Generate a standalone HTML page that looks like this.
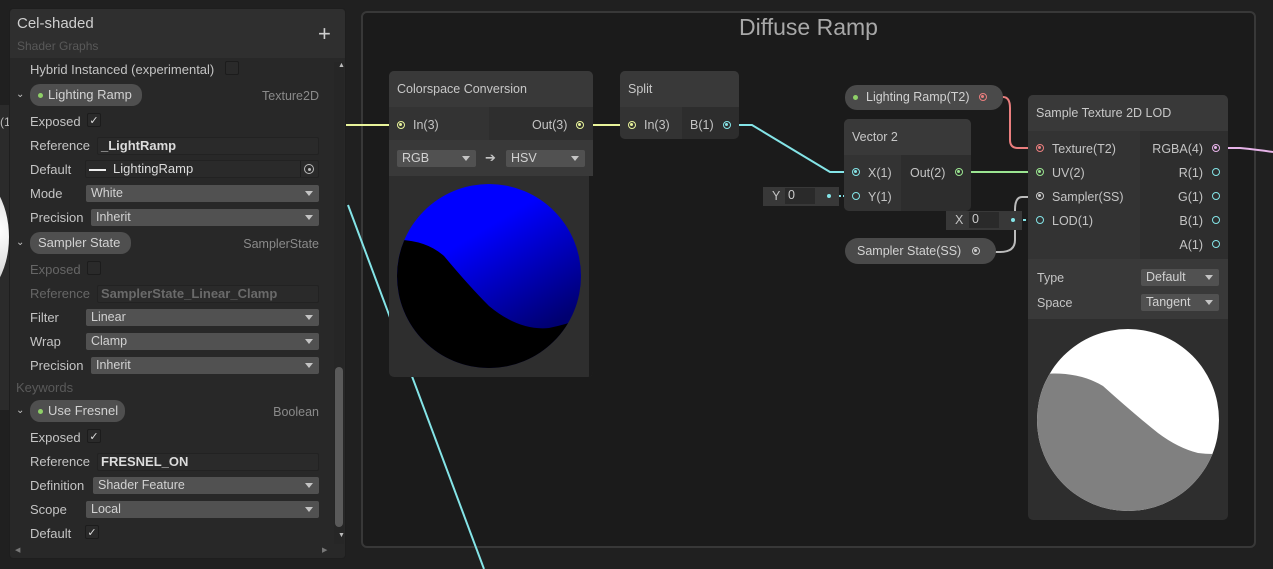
<!DOCTYPE html>
<html><head><meta charset="utf-8"><style>
*{margin:0;padding:0;box-sizing:border-box}
body{width:1273px;height:569px;overflow:hidden;background:#202020;font-family:"Liberation Sans","DejaVu Sans",sans-serif;font-size:12.5px;color:#c4c4c4;position:relative}
.a{position:absolute}
.node{position:absolute;background:#2d2d2d;border-radius:5px;overflow:hidden}
.title{position:absolute;left:0;right:0;top:0;background:#393939;color:#c8c8c8;font-size:12.5px;padding-left:8px}
.t{position:absolute;white-space:nowrap;font-size:12.5px}
.port{position:absolute;width:8px;height:8px;border-radius:50%;border:1.5px solid}
.port.f::after{content:"";position:absolute;left:1px;top:1px;width:3px;height:3px;border-radius:50%;background:currentColor}
.dd{position:absolute;background:#515151;border-radius:2px;height:17px;color:#d2d2d2;font-size:12.5px;padding-left:5px;line-height:17px}
.dd::after{content:"";position:absolute;right:6px;top:6px;border-left:4px solid transparent;border-right:4px solid transparent;border-top:5px solid #c4c4c4}
.lbl{position:absolute;left:30px;font-size:13px;color:#c4c4c4;white-space:nowrap}
.fld{position:absolute;left:97px;width:222px;height:18px;background:#2a2a2a;border:1px solid #222;border-radius:2px;font-weight:bold;color:#dcdcdc;padding-left:3px;line-height:16px;font-size:13px}
.chk{position:absolute;width:14px;height:14px;background:#2a2a2a;border:1px solid #1c1c1c;border-radius:2px;color:#ddd;font-size:11px;line-height:14px;text-align:center}
.pill{position:absolute;background:#4f4f4f;border-radius:10px;height:22px;line-height:22px;color:#d2d2d2;font-size:13px;white-space:nowrap}
.arrow{position:absolute;left:16px;font-size:10px;color:#c4c4c4}
.typ{position:absolute;right:954px;color:#8a8a8a;font-size:12.5px}
</style></head><body>

<div class="a" style="left:0;top:105px;width:9px;height:305px;background:#2b2b2b"></div>
<div class="a" style="left:0;top:115px;width:9px;height:20px;overflow:hidden;color:#bbb;font-size:12px">(1</div>
<div class="a" style="left:-75px;top:172px;width:84px;height:130px;border-radius:50%;background:radial-gradient(circle at 85% 45%,#fff,#ddd 40%,#777)"></div>

<div class="a" style="left:361px;top:11px;width:895px;height:537px;border:2px solid #383838;border-radius:6px;background:#1b1b1b"></div>
<div class="a" style="left:361px;top:14px;width:895px;text-align:center;font-size:23px;color:#a8a8a8">Diffuse Ramp</div>

<svg class="a" style="left:0;top:0" width="1273" height="569">
<g fill="none" stroke-width="2">
<path d="M346 125 L400 125" stroke="#e8f39a"/>
<path d="M592 125 L632 125" stroke="#e8f39a"/>
<path d="M727 125 L752 125 L830 172 L856 172" stroke="#84e4e7"/>
<path d="M348 205 L484 569" stroke="#84e4e7"/>
<path d="M958 172 L1040 172" stroke="#9be591"/>
<path d="M983 97 L1003 97 Q1010 97 1010 108 L1010 140 Q1010 148 1018 148 L1040 148" stroke="#ea7e7e"/>
<path d="M1040 197 L1022 197 Q1015 197 1015 210 L1015 240 Q1015 252 1000 252 L995 252" stroke="#bbbbbb"/>
<path d="M1216 148 L1240 148 Q1260 150 1273 152" stroke="#e6b3e8"/>
<path d="M828 196 L856 196" stroke="#84e4e7" stroke-dasharray="3 2"/>
<path d="M1013 220 L1040 220" stroke="#84e4e7" stroke-dasharray="3 2"/>
</g>
</svg>

<div class="node" style="left:389px;top:71px;width:204px;height:306px;background:#2e2e2e">
 <div class="title" style="height:36px;line-height:36px">Colorspace Conversion</div>
 <div class="a" style="left:0;top:36px;width:100px;height:33px;background:#333"></div>
 <div class="a" style="left:0;top:69px;width:204px;height:36px;background:#393939"></div>
 <div class="a" style="left:200px;top:105px;width:4px;height:201px;background:#1b1b1b"></div>
</div>
<div class="port f" style="left:397px;top:121px;color:#e8f39a"></div>
<div class="t" style="left:413px;top:118px">In(3)</div>
<div class="t" style="left:532px;top:118px">Out(3)</div>
<div class="port f" style="left:576px;top:121px;color:#e8f39a"></div>
<div class="dd" style="left:397px;top:150px;width:79px">RGB</div>
<div class="t" style="left:485px;top:150px;font-size:13px">➔</div>
<div class="dd" style="left:506px;top:150px;width:79px">HSV</div>
<svg class="a" style="left:389px;top:176px" width="200" height="200">
<defs>
<clipPath id="c1"><circle cx="100" cy="100" r="92"/></clipPath>
<linearGradient id="g1" x1="0.2" y1="0" x2="0.8" y2="1"><stop offset="0.3" stop-color="#0000ff"/><stop offset="0.85" stop-color="#000070"/></linearGradient>
</defs>
<circle cx="100" cy="100" r="92" fill="url(#g1)"/>
<path clip-path="url(#c1)" d="M0 64 Q35 62 55 80 Q80 110 100 130 Q130 155 160 152 Q180 148 200 140 L200 200 L0 200Z" fill="#000"/>
</svg>

<div class="node" style="left:620px;top:71px;width:119px;height:68px">
 <div class="title" style="height:36px;line-height:36px">Split</div>
 <div class="a" style="left:0;top:36px;width:62px;height:32px;background:#333"></div>
</div>
<div class="port f" style="left:628px;top:121px;color:#e8f39a"></div>
<div class="t" style="left:644px;top:118px">In(3)</div>
<div class="t" style="left:690px;top:118px">B(1)</div>
<div class="port f" style="left:723px;top:121px;color:#84e4e7"></div>

<div class="pill" style="left:845px;top:85px;width:158px;height:25px;line-height:25px;border-radius:12px;background:#4a4a4a;padding-left:21px;font-size:12.5px">Lighting Ramp(T2)</div>
<div class="a" style="left:853px;top:95px;width:5px;height:5px;border-radius:50%;background:#8fd068"></div>
<div class="port f" style="left:979px;top:93px;color:#ea7e7e"></div>

<div class="node" style="left:844px;top:119px;width:127px;height:92px">
 <div class="title" style="height:36px;line-height:36px">Vector 2</div>
 <div class="a" style="left:0;top:36px;width:57px;height:56px;background:#333"></div>
</div>
<div class="port f" style="left:852px;top:168px;color:#84e4e7"></div>
<div class="t" style="left:868px;top:166px">X(1)</div>
<div class="t" style="left:910px;top:166px">Out(2)</div>
<div class="port f" style="left:955px;top:168px;color:#9be591"></div>
<div class="port" style="left:852px;top:192px;color:#84e4e7"></div>
<div class="t" style="left:868px;top:190px">Y(1)</div>
<div class="a" style="left:763px;top:187px;width:76px;height:19px;background:#383838"></div>
<div class="t" style="left:772px;top:189px">Y</div>
<div class="a" style="left:785px;top:188px;width:30px;height:16px;background:#2a2a2a;color:#ccc;padding-left:3px">0</div>
<div class="a" style="left:827px;top:194px;width:4px;height:4px;border-radius:50%;background:#84e4e7"></div>

<div class="a" style="left:946px;top:211px;width:76px;height:19px;background:#383838"></div>
<div class="t" style="left:955px;top:213px">X</div>
<div class="a" style="left:969px;top:212px;width:30px;height:16px;background:#2a2a2a;color:#ccc;padding-left:3px">0</div>
<div class="a" style="left:1011px;top:218px;width:4px;height:4px;border-radius:50%;background:#84e4e7"></div>

<div class="pill" style="left:845px;top:238px;width:151px;height:26px;line-height:26px;border-radius:13px;background:#4a4a4a;padding-left:12px;font-size:12.5px">Sampler State(SS)</div>
<div class="port f" style="left:972px;top:247px;color:#ccc"></div>

<div class="node" style="left:1028px;top:95px;width:200px;height:425px;background:#2e2e2e">
 <div class="title" style="height:36px;line-height:36px">Sample Texture 2D LOD</div>
 <div class="a" style="left:0;top:36px;width:112px;height:128px;background:#333"></div>
 <div class="a" style="left:0;top:164px;width:200px;height:60px;background:#393939"></div>
</div>
<div class="port f" style="left:1036px;top:144px;color:#ea7e7e"></div>
<div class="t" style="left:1052px;top:142px">Texture(T2)</div>
<div class="port f" style="left:1036px;top:168px;color:#9be591"></div>
<div class="t" style="left:1052px;top:166px">UV(2)</div>
<div class="port f" style="left:1036px;top:192px;color:#ccc"></div>
<div class="t" style="left:1052px;top:190px">Sampler(SS)</div>
<div class="port" style="left:1036px;top:216px;color:#84e4e7"></div>
<div class="t" style="left:1052px;top:214px">LOD(1)</div>
<div class="t" style="left:1143px;top:142px;width:60px;text-align:right">RGBA(4)</div>
<div class="port f" style="left:1212px;top:144px;color:#e6b3e8"></div>
<div class="t" style="left:1143px;top:166px;width:60px;text-align:right">R(1)</div>
<div class="port" style="left:1212px;top:168px;color:#84e4e7"></div>
<div class="t" style="left:1143px;top:190px;width:60px;text-align:right">G(1)</div>
<div class="port" style="left:1212px;top:192px;color:#84e4e7"></div>
<div class="t" style="left:1143px;top:214px;width:60px;text-align:right">B(1)</div>
<div class="port" style="left:1212px;top:216px;color:#84e4e7"></div>
<div class="t" style="left:1143px;top:238px;width:60px;text-align:right">A(1)</div>
<div class="port" style="left:1212px;top:240px;color:#84e4e7"></div>
<div class="t" style="left:1037px;top:271px">Type</div>
<div class="dd" style="left:1141px;top:269px;width:78px">Default</div>
<div class="t" style="left:1037px;top:296px">Space</div>
<div class="dd" style="left:1141px;top:294px;width:78px">Tangent</div>
<svg class="a" style="left:1028px;top:318px" width="200" height="202">
<defs><clipPath id="c3"><circle cx="100" cy="102" r="91"/></clipPath></defs>
<circle cx="100" cy="102" r="91" fill="#fff"/>
<path clip-path="url(#c3)" d="M0 58 Q45 50 75 68 Q105 95 130 115 Q150 130 170 135 Q185 137 200 135 L200 210 L0 210Z" fill="#808080"/>
</svg>

<div class="a" style="left:9px;top:8px;width:337px;height:551px;background:#282828;border-radius:4px;border:1px solid #1e1e1e"></div>
<div class="a" style="left:10px;top:9px;width:335px;height:49px;background:#2f2f2f;border-radius:4px 4px 0 0"></div>
<div class="a" style="left:17px;top:15px;font-size:15px;color:#cfcfcf">Cel-shaded</div>
<div class="a" style="left:17px;top:39px;font-size:12px;color:#595959">Shader Graphs</div>
<div class="a" style="left:318px;top:22px;font-size:22px;color:#cfcfcf;line-height:24px">+</div>
<div class="a" style="left:334px;top:62px;width:10px;height:482px;background:#262626"></div>
<div class="a" style="left:338px;top:62px;font-size:7px;color:#bbb">▲</div>
<div class="a" style="left:335px;top:367px;width:8px;height:160px;background:#5a5a5a;border-radius:4px"></div>
<div class="a" style="left:338px;top:532px;font-size:7px;color:#bbb">▼</div>
<div class="a" style="left:15px;top:546px;font-size:7px;color:#777">◀</div>
<div class="a" style="left:322px;top:546px;font-size:7px;color:#777">▶</div>

<div class="lbl" style="top:62px">Hybrid Instanced (experimental)</div>
<div class="chk" style="left:225px;top:61px"></div>

<div class="arrow" style="top:89px">⌄</div>
<div class="pill" style="left:30px;top:84px;width:112px;padding-left:18px">Lighting Ramp</div>
<div class="a" style="left:38px;top:93px;width:5px;height:5px;border-radius:50%;background:#8fd068"></div>
<div class="typ" style="top:89px">Texture2D</div>
<div class="lbl" style="top:114px">Exposed</div>
<div class="chk" style="left:87px;top:113px">✓</div>
<div class="lbl" style="top:138px">Reference</div>
<div class="fld" style="top:137px">_LightRamp</div>
<div class="lbl" style="top:162px">Default</div>
<div class="fld" style="left:85px;width:234px;top:160px;font-weight:normal;padding-left:27px">LightingRamp</div>
<div class="a" style="left:89px;top:169px;width:17px;height:2px;background:#eee"></div>
<div class="a" style="left:300px;top:161px;width:1px;height:16px;background:#1e1e1e"></div>
<div class="a" style="left:304px;top:164px;width:10px;height:10px;border-radius:50%;border:1.5px solid #bbb"></div>
<div class="a" style="left:308px;top:168px;width:3px;height:3px;border-radius:50%;background:#bbb"></div>
<div class="lbl" style="top:186px">Mode</div>
<div class="dd" style="left:86px;top:185px;width:233px">White</div>
<div class="lbl" style="top:210px">Precision</div>
<div class="dd" style="left:91px;top:209px;width:228px">Inherit</div>

<div class="arrow" style="top:237px">⌄</div>
<div class="pill" style="left:30px;top:232px;width:101px;padding-left:8px">Sampler State</div>
<div class="typ" style="top:237px">SamplerState</div>
<div class="lbl" style="top:262px;color:#666">Exposed</div>
<div class="chk" style="left:87px;top:261px"></div>
<div class="lbl" style="top:286px;color:#666">Reference</div>
<div class="fld" style="top:285px;color:#6a6a6a">SamplerState_Linear_Clamp</div>
<div class="lbl" style="top:310px">Filter</div>
<div class="dd" style="left:86px;top:309px;width:233px">Linear</div>
<div class="lbl" style="top:334px">Wrap</div>
<div class="dd" style="left:86px;top:333px;width:233px">Clamp</div>
<div class="lbl" style="top:358px">Precision</div>
<div class="dd" style="left:91px;top:357px;width:228px">Inherit</div>
<div class="a" style="left:16px;top:380px;color:#5a5a5a;font-size:13px">Keywords</div>

<div class="arrow" style="top:405px">⌄</div>
<div class="pill" style="left:30px;top:400px;width:95px;padding-left:18px">Use Fresnel</div>
<div class="a" style="left:38px;top:409px;width:5px;height:5px;border-radius:50%;background:#8fd068"></div>
<div class="typ" style="top:405px">Boolean</div>
<div class="lbl" style="top:430px">Exposed</div>
<div class="chk" style="left:87px;top:429px">✓</div>
<div class="lbl" style="top:454px">Reference</div>
<div class="fld" style="top:453px">FRESNEL_ON</div>
<div class="lbl" style="top:478px">Definition</div>
<div class="dd" style="left:93px;top:477px;width:226px">Shader Feature</div>
<div class="lbl" style="top:502px">Scope</div>
<div class="dd" style="left:86px;top:501px;width:233px">Local</div>
<div class="lbl" style="top:526px">Default</div>
<div class="chk" style="left:85px;top:525px">✓</div>
</body></html>
